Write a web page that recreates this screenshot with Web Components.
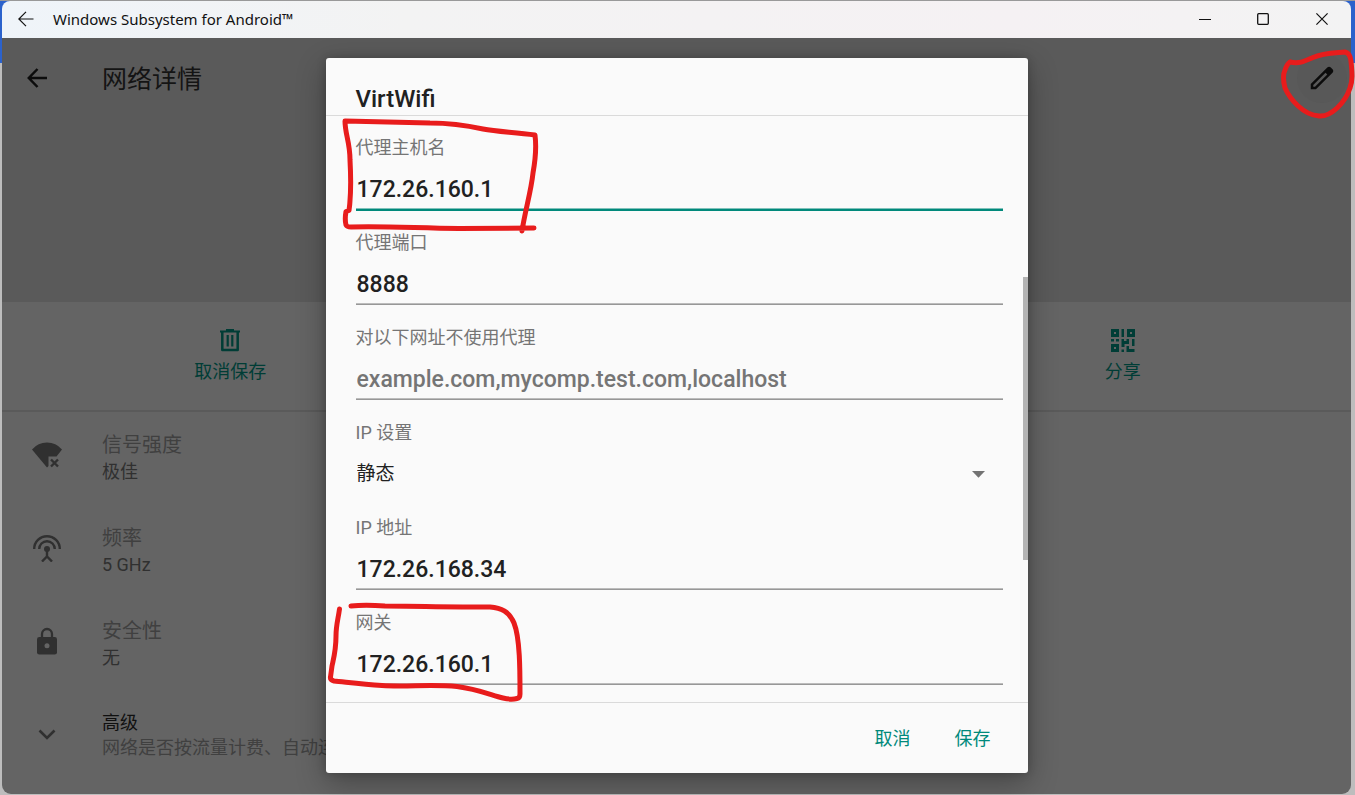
<!DOCTYPE html>
<html lang="zh-CN">
<head>
<meta charset="utf-8">
<title>Windows Subsystem for Android™</title>
<style>
html { height: 100%; }
body {
  margin: 0; min-height: 100vh; box-sizing: border-box; padding: 1px 4px 1px 2px;
  display: flex; overflow: hidden;
  font-family: Roboto, "Noto Sans CJK SC", sans-serif;
  background: linear-gradient(#999, #999) 0 0 / 100% 1px no-repeat,
    linear-gradient(#2b62cc, #2b62cc) 0 0 / 100% 63px no-repeat, #bdbdbd;
}
</style>
</head>
<body>
<app-window></app-window>
<script>
const define = (name, html, setup) => customElements.define(name, class extends HTMLElement {
  constructor() {
    super();
    const t = document.createElement('template');
    t.innerHTML = html;
    this.attachShadow({ mode: 'open' }).append(t.content.cloneNode(true));
  }
  connectedCallback() { if (setup) setup(this, this.shadowRoot); }
});

define('title-bar', `
<style>
:host { display: flex; align-items: center; height: 37px; color: #111;
  background: linear-gradient(90deg, #eff4f9, #f3f3f3 30%, #f5f1f3 75%, #f3f3f3); border-radius: 8px 8px 0 0; }
button { border: 0; background: none; padding: 0 0 2px; box-sizing: border-box; display: grid; place-items: center; height: 37px; color: inherit; }
.back { width: 47px; }
.win { width: 58px; }
.win:last-child { width: 59px; }
h1 { flex: 1; margin: 0 0 0 4px; padding-bottom: 2px; font: 400 15px/24px "Noto Sans", sans-serif; }
svg { fill: none; stroke: currentColor; display: block; }
</style>
<button class="back" aria-label="返回"><svg width="16" height="16" stroke-width="1.2"><path d="M15.500 8H1M8 .8L.8 8L8 15.200"/></svg></button>
<h1>Windows Subsystem for Android™</h1>
<button class="win" aria-label="最小化"><svg width="12" height="12"><path d="M0 6.500H12"/></svg></button>
<button class="win" aria-label="最大化"><svg width="12" height="12" stroke-width="1.300"><rect x=".7" y=".7" width="10.600" height="10.600" rx="1"/></svg></button>
<button class="win" aria-label="关闭"><svg width="12" height="12" stroke-width="1.200"><path d="M.4.4L11.600 11.600M11.600.4L.4 11.600"/></svg></button>`);

define('page-header', `
<style>
:host { display: block; background: #5a5a5a; height: 264px; color: #141414; }
.bar { display: flex; align-items: center; padding: 15px 4px 0 10px; }
button { position: relative; border: 0; padding: 0; width: 50px; height: 50px; display: grid; place-items: center; background: none; color: #0c0c0c; border-radius: 50%; }
.edit { background: #585858; }
h2 { flex: 1; margin: 0 0 0 40px; padding-top: 3px; font-weight: 400; font-size: 25px; line-height: 32px; }
svg { display: block; }
.mark { position: absolute; left: 0; top: 0; width: 50px; height: 50px; overflow: visible; fill: none; stroke: #e81c1c; stroke-width: 5; stroke-linecap: round; stroke-linejoin: round; pointer-events: none; }
</style>
<div class="bar">
<button aria-label="向上导航"><svg width="20" height="20" fill="none" stroke="currentColor" stroke-width="2.500"><path d="M20 10H2M10.500 1L1.800 10l8.700 9"/></svg></button>
<h2>网络详情</h2>
<button class="edit" aria-label="修改"><svg width="30" height="30" viewBox="0 0 24 24" fill="currentColor"><path d="M20.410 4.940l-1.350-1.350c-.78-.78-2.050-.78-2.830 0L3 16.820V21h4.180L20.410 7.770c.79-.78.79-2.050 0-2.830zM6.410 19.060L5 19v-1.360l9.820-9.820 1.410 1.410z"/></svg>
<svg class="mark" viewBox="1297 53 50 50"><path d="M1290 62C1300 64 1305 61 1313 57.500C1323 53 1335 53 1345 52Q1350 53 1351 61C1352 72 1353 80 1350 88C1345 103 1331 117 1319 116C1303 115 1290 99 1285 88Q1282 76 1285 70Q1287 64 1290 62"/></svg></button>
</div>`);

define('action-button', `
<style>
:host { flex: 1; display: grid; justify-items: center; align-items: start; }
button { border: 0; background: none; padding: 0; color: #003d36; font: inherit; font-size: 18px; line-height: 26px; display: grid; justify-items: center; gap: 6px; }
</style>
<button><slot name="icon"></slot><slot></slot></button>`);

define('info-row', `
<style>
:host { display: flex; align-items: center; height: 93px; color: #303030; }
.icon { width: 90px; display: grid; place-items: center; height: 86px; align-self: start; }
.text { padding: 0 0 2px 10px; font-size: 18px; line-height: 26px; }
.title { font-size: 20px; line-height: 28px; color: #404040; white-space: nowrap; }
:host([kind="expand"]) .icon { height: 88px; }
:host([kind="expand"]) .title { font-size: 18px; line-height: 24px; color: #101010; }
:host([kind="expand"]) .text { color: #404040; padding-bottom: 4px; }
</style>
<div class="icon"><slot name="icon"></slot></div>
<div class="text"><div class="title"><slot name="title"></slot></div><slot></slot></div>`);

const fieldStyle = `
:host { display: grid; gap: 8px; }
label { font-size: 18px; line-height: 24px; color: #757575; }
input, select { box-sizing: border-box; width: 100%; height: 42px; margin: 0; padding: 2px 0 0 1px; border: 0; border-radius: 0; outline: 0; background: none; color: #212121; font-family: inherit; appearance: none; }`;

define('text-field', `
<style>${fieldStyle}
input { font-size: 23px; font-weight: 500; border-bottom: 1px solid #979797; box-shadow: inset 0 -1px #bcbcbc; }
input::placeholder { color: #757575; opacity: 1; }
:host([active]) input { border-color: #00897b; box-shadow: inset 0 -1px #80c1ba, 0 1px #00897b; }
</style>
<label for="f"></label><input id="f" type="text">`, (el, root) => {
  root.querySelector('label').textContent = el.getAttribute('label');
  const i = root.querySelector('input');
  i.value = el.getAttribute('value') || '';
  i.placeholder = el.getAttribute('placeholder') || '';
});

define('select-field', `
<style>${fieldStyle}
.wrap { position: relative; }
select { display: block; font-size: 19px; padding-top: 0; }
svg { position: absolute; right: 18px; top: 18px; fill: #737373; pointer-events: none; }
</style>
<label for="f"></label><div class="wrap"><select id="f"></select><svg width="13" height="7"><path d="M0 0h13L6.500 6.800z"/></svg></div>`, (el, root) => {
  root.querySelector('label').textContent = el.getAttribute('label');
  root.querySelector('select').replaceChildren(new Option(el.getAttribute('value')));
});

define('modal-dialog', `
<style>
:host { position: relative; display: block; width: 100%; max-width: 702px; background: #fafafa; border-radius: 3px;
  box-shadow: 0 10px 30px rgba(0,0,0,.3), 0 0 10px rgba(0,0,0,.2); color: #212121; }
header { padding: 25px 30px 0; border-bottom: 1px solid #dadada; }
h2 { margin: 0; font-size: 24px; font-weight: 500; line-height: 32px; }
.body { position: relative; display: grid; gap: 21px; padding: 20px 25px 17px 30px; }
.thumb { position: absolute; right: 0; top: 161px; width: 5px; height: 283px; background: #b3b3b3; }
footer { display: flex; justify-content: flex-end; gap: 8px; padding: 16px 19px 18px; border-top: 1px solid #dadada; }
button { border: 0; background: none; padding: 0 18px; height: 36px; font: inherit; font-size: 18px; color: #00897b; }
.mark { position: absolute; left: 0; top: 0; width: 702px; height: 715px; overflow: visible; fill: none; stroke: #e81c1c; stroke-width: 5; stroke-linecap: round; stroke-linejoin: round; pointer-events: none; }
</style>
<header><h2><slot name="title"></slot></h2></header>
<div class="body"><slot></slot><div class="thumb"></div></div>
<footer><button>取消</button><button>保存</button></footer>
<svg class="mark" viewBox="326 58 702 715">
<path d="M522 231C525 211 531 192 533 173Q537 151 535 135C515 132 498 132 483 129C460 124 448 123 430 123L345 121C345 134 350 142 350 160C351 178 351 196 349 210.500L346 211.500C345 217 345 221 346 225Q347 227 351 227C385 226 415 228 459 228.500L534 228"/>
<path d="M339.500 609C338 620 336 625 336 636C336 650 334 657 332 666L330.500 677Q330 680 334 681C345 682 361 684 382 685.500C407 687 432 684 457 686.500C477 689 491 695 503 698Q511 700 517 698.500Q520 698 520 694C520 670 520 638 514 623C509 611 501 608 490 607C450 607 410 606 385 606C370 605 361 605 351 606"/>
</svg>`);

define('app-window', `
<style>
:host { flex: 1; min-width: 0; display: flex; flex-direction: column; }
main { flex: 1; position: relative; background: #646464; border-radius: 0 0 9px 9px; }
.actions { display: flex; padding: 25px 5px 0; height: 83px; border-bottom: 2px solid #5a5a5a; }
.overlay { position: absolute; inset: 0; padding-bottom: 2px; display: grid; place-items: center; }
svg { display: block; }
</style>
<title-bar></title-bar>
<main>
<page-header></page-header>
<div class="actions">
<action-button><svg slot="icon" width="26" height="26" viewBox="0 0 26 26" fill="none" stroke="currentColor"><path stroke-width="2" d="M3 4.500h20M9 3h8"/><path stroke-width="2.500" d="M5.300 5v18H20.700V5" stroke-linejoin="round"/><path stroke-width="2.200" d="M10.700 8v11.500M15.300 8v11.500"/></svg>取消保存</action-button>
<action-button aria-hidden="true"></action-button>
<action-button><svg slot="icon" width="26" height="26" viewBox="0 0 26 26" fill="currentColor"><path fill-rule="evenodd" d="M1 2h8v8H1zM4 5v2h2V5zM17 2h8v8h-8zM20 5v2h2V5zM1 17h8v8H1zM4 20v2h2v-2zM11.500 2H14v8h-2.500zM1 12h3v2.500H1zM6 12h3v2.500H6zM11.500 12H14v2h2.500v-2H19v5h-4.500v3h-3zM22 12h2.500v7H22zM11.500 22.500H14V25h-2.500zM16.500 19H19v3h5.500v3h-8z"/></svg>分享</action-button>
</div>
<info-row><svg slot="icon" width="30" height="26" viewBox="0 0 30 26"><path fill="currentColor" d="M0 7.500Q6 .5 15 .5T30 7.500L24.500 14.500H16.500V24L15 25.500z"/><path d="M19 17.500l7 7M26 17.500l-7 7" stroke="currentColor" stroke-width="2.400"/></svg><span slot="title">信号强度</span>极佳</info-row>
<info-row><svg slot="icon" width="30" height="28" viewBox="0 0 30 28" fill="none" stroke="currentColor" stroke-width="2.400"><path d="M2.200 15a12.800 12.800 0 0 1 25.600 0M7.200 15a7.800 7.800 0 0 1 15.600 0M15 16v7M10 27.500l5-5 5 5"/><circle cx="15" cy="15" r="3" fill="currentColor" stroke="none"/></svg><span slot="title">频率</span>5 GHz</info-row>
<info-row><svg slot="icon" width="20" height="28" viewBox="0 0 20 28"><rect y="10" width="20" height="17.500" rx="2.300" fill="currentColor"/><path d="M5 11V7a5 5 0 0 1 10 0v4" fill="none" stroke="currentColor" stroke-width="2.300"/><circle cx="10" cy="18.800" r="2.500" fill="#646464"/></svg><span slot="title">安全性</span>无</info-row>
<info-row kind="expand"><svg slot="icon" width="18" height="12" viewBox="0 0 18 12" fill="none" stroke="currentColor" stroke-width="2.600"><path d="M1.500 1.500L9 9l7.500-7.500"/></svg><span slot="title">高级</span>网络是否按流量计费、自动连接</info-row>
<div class="overlay">
<modal-dialog role="dialog" aria-label="VirtWifi">
<span slot="title">VirtWifi</span>
<text-field active label="代理主机名" value="172.26.160.1"></text-field>
<text-field label="代理端口" value="8888"></text-field>
<text-field label="对以下网址不使用代理" placeholder="example.com,mycomp.test.com,localhost"></text-field>
<select-field label="IP 设置" value="静态"></select-field>
<text-field label="IP 地址" value="172.26.168.34"></text-field>
<text-field label="网关" value="172.26.160.1"></text-field>
</modal-dialog>
</div>
</main>`);
</script>
</body>
</html>
